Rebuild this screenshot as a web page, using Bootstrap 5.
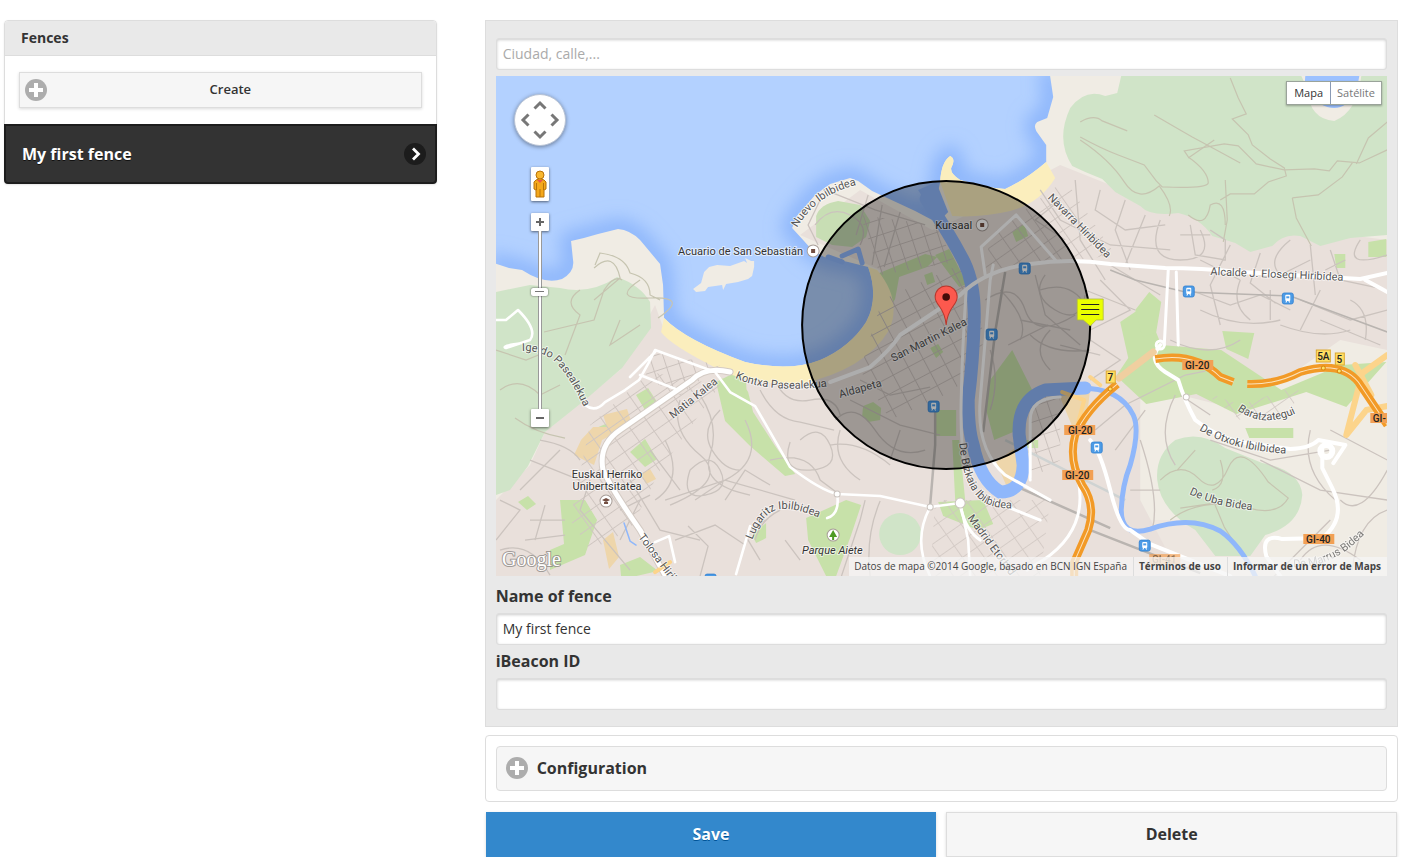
<!DOCTYPE html>
<html lang="en">
<head>
<meta charset="utf-8">
<meta name="viewport" content="width=device-width, initial-scale=1">
<title>Fences</title>
<link href="https://cdn.jsdelivr.net/npm/bootstrap@5.3.0/dist/css/bootstrap.min.css" rel="stylesheet">
<style>
body{font-family:"Open Sans","Noto Sans",sans-serif;font-size:16px;line-height:20px;color:#333;background:#fff}
.side-col{padding:0 36px 0 4px}
.main-col{padding:0 20px 0 12px}
.fence-panel{border:1px solid #ddd;border-radius:4px;box-shadow:0 1px 2px rgba(0,0,0,.1)}
.fence-title{background:#e9e9e9;border-bottom:1px solid #ddd;font-size:14px;font-weight:700;padding:7px 16px;margin:0;line-height:20px;border-radius:3px 3px 0 0}
.flat-btn{background:#f6f6f6;border:1px solid #ddd;border-radius:0;color:#333;font-weight:700;box-shadow:0 1px 3px rgba(0,0,0,.15)}
.flat-btn:hover{background:#ededed;border-color:#ddd;color:#333}
.create-wrap{padding:16px 14px}
.create-btn{font-size:13px;font-weight:600;line-height:18px;padding:7px 0 9px 20px;position:relative}
.create-btn svg{position:absolute;left:5px;top:6px}
.fence-item{background:#333;border:2px solid #1d1d1d;border-radius:0 0 4px 4px;color:#fff;font-weight:700;padding:17px 9px 17px 16px;margin:0 -1px -1px;line-height:22px;text-decoration:none;text-shadow:0 1px 0 #111}
.fence-item:hover{color:#fff}
.editor{background:#e9e9e9;border:1px solid #ddd;padding:17px 10px 16px}
.field{height:32px;border:1px solid #ddd;border-radius:3px;font-size:14px;line-height:20px;padding:4px 6px 6px;color:#333;box-shadow:inset 0 1px 3px rgba(0,0,0,.2)}
.field::placeholder{color:#aaa;opacity:1}
.field-label{display:block;font-weight:700;line-height:20px;margin:0 0 7px}
.field+.field-label{margin-top:6px}
.config-panel{border:1px solid #ddd;border-radius:4px;padding:10px;margin-top:8px}
.config-btn{background:#f6f6f6;border:1px solid #ddd;border-radius:4px;font-weight:700;color:#333;padding:10px 9px 11px;line-height:20px;gap:9px}
.config-btn:hover{background:#ededed;border-color:#ddd}
.actions{padding:0 1px;margin-top:10px;gap:10px}
.actions .btn{line-height:21px;padding:11px;flex:1 1 0}
.save-btn{background:#38c;border:1px solid #38c;border-radius:0;color:#fff;font-weight:700;text-shadow:0 1px 0 #059;box-shadow:0 1px 3px rgba(0,0,0,.15)}
.map-box{height:500px;margin:6px 0 10px;background:#b3d1ff}
.map-svg{display:block;width:100%;height:100%}
.map-nav{position:absolute;left:18px;top:18px;width:52px}
.pan-pad{width:52px;height:52px;border-radius:50%;background:#fff;border:1px solid #b9c4d6;box-shadow:0 1px 4px rgba(0,0,0,.4)}
.map-key{width:18px;height:18px;padding:0;border:0;border-radius:1px;background:#fff;box-shadow:0 1px 3px rgba(0,0,0,.55);display:grid;place-items:center}
.peg{height:34px;margin:21px 0 12px}
.zoom-track{width:18px;height:178px;position:relative}
.zoom-track input{-webkit-appearance:none;appearance:none;position:absolute;left:50%;top:50%;width:178px;height:18px;margin:0;background:transparent;transform:translate(-50%,-50%) rotate(-90deg)}
.zoom-track input::-webkit-slider-runnable-track{height:4px;background:#fff;border-top:1px solid #999;border-bottom:1px solid #999;box-sizing:border-box}
.zoom-track input::-webkit-slider-thumb{-webkit-appearance:none;width:8px;height:17px;margin-top:-8px;border-radius:2px;background:linear-gradient(#777,#777) center/1px 9px no-repeat #fff;box-shadow:0 0 2px rgba(0,0,0,.7)}
.map-type{position:absolute;right:5px;top:5px;background:#fff;border:1px solid #9aa39a;box-shadow:0 1px 2px rgba(0,0,0,.3)}
.map-type button{border:0;background:#fff;font-size:11px;line-height:22px;padding:0 7px;color:#777}
.map-type button+button{border-left:1px solid #8a9ab5;padding:0 6px}
.map-type .on{color:#333}
.map-credit{position:absolute;right:0;bottom:0;background:rgba(245,245,245,.75);font-size:10px;line-height:19px;color:#444;white-space:nowrap}
.map-credit>*{padding:0 6px 0 5px;color:#444;text-decoration:none}
.map-credit a{font-weight:700;border-left:1px solid #ddd}
.map-logo{font-family:"Liberation Serif",serif;font-size:20px}
.lb{font-family:Roboto,sans-serif;font-size:11px;fill:#555;stroke:#fff;stroke-opacity:.6;stroke-width:2px;paint-order:stroke;stroke-linejoin:round}
.poi{fill:#333}
.shield{font-family:Roboto,sans-serif;font-size:10px;font-weight:500;fill:#222;text-anchor:middle}
</style>
</head>
<body>
<svg width="0" height="0" class="position-absolute" aria-hidden="true">
  <symbol id="plus" viewBox="0 0 22 22"><circle cx="11" cy="11" r="11" fill="#adadad"/><path d="M9 4h4v5h5v4h-5v5H9v-5H4V9h5z" fill="#fff"/></symbol>
</svg>
<div class="container-fluid p-0">
<div class="row g-0 pt-1 mt-3">
  <aside class="col-4 side-col">
    <div class="fence-panel">
      <h2 class="fence-title">Fences</h2>
      <div class="create-wrap">
        <button type="button" class="btn flat-btn create-btn w-100"><svg width="22" height="22" aria-hidden="true"><use href="#plus"/></svg>Create</button>
      </div>
      <a href="#" class="fence-item d-flex align-items-center justify-content-between">My first fence
        <svg width="22" height="22" viewBox="0 0 22 22" aria-hidden="true"><circle cx="11" cy="11" r="11" fill="#1c1c1c"/><path d="M9 5.500l5.500 5.500L9 16.500" fill="none" stroke="#fff" stroke-width="2.800"/></svg></a>
    </div>
  </aside>
  <main class="col-8 main-col">
    <form class="editor">
      <input class="form-control field" type="text" placeholder="Ciudad, calle,..." aria-label="Ciudad, calle">
      <div class="map-box position-relative overflow-hidden">
      <svg class="map-svg" viewBox="496 76 891 500" preserveAspectRatio="xMidYMid slice" role="img" aria-label="Mapa">
        <defs>
          <filter id="soft" x="-10%" y="-10%" width="120%" height="120%"><feGaussianBlur stdDeviation="9"/></filter>
          <pattern id="gridA" width="17" height="15" patternUnits="userSpaceOnUse" patternTransform="rotate(-28)"><path d="M0 0H17M0 0V15" fill="none" stroke="#cbc2bd" stroke-width="2"/></pattern>
          <pattern id="gridB" width="13" height="15" patternUnits="userSpaceOnUse" patternTransform="rotate(-18)"><path d="M0 0H13M0 0V15" fill="none" stroke="#cbc2bd" stroke-width="2"/></pattern>
          <pattern id="gridC" width="18" height="14" patternUnits="userSpaceOnUse" patternTransform="rotate(-35)"><path d="M0 0H18M0 0V14" fill="none" stroke="#cfc6c1" stroke-width="2"/></pattern>
          <path id="shore" d="M490 262L509 268L522 270Q545 285 562 279Q575 272 573 260L571 241Q585 238 598 234L618 229Q630 230 640 240L660 264L663 285L664 318Q685 340 745 362Q790 372 820 360Q850 347 866 322Q879 298 868 267L848 262L824 257L812 250L803 240L792 228L797 216L815 195L830 184L850 178L858 181L872 191L915 211L932 220L940 182Q941 162 950 156Q956 159 951 168Q950 174 960 180Q985 188 1005 189Q1025 180 1046 162V145L1036 131Q1033 125 1037 122L1047 118L1053 97L1049 70"/>
          <g id="train"><rect width="11" height="11" rx="2" fill="#4c9be6" stroke="#2f7fd0" stroke-width=".8"/><rect x="3" y="1.800" width="5" height="6.200" rx="1" fill="#fff"/><path d="M4 3.300h3v2H4z" fill="#4c9be6"/><path d="M3.500 9.500l1-1.500M7.500 9.500l-1-1.500" stroke="#fff"/></g>
        </defs>
        <rect x="496" y="76" width="891" height="500" fill="#b3d1ff"/>
        <use href="#shore" fill="none" stroke="#7eabfa" stroke-opacity=".75" stroke-width="20" filter="url(#soft)"/>
        <path d="M490 262L509 268L522 270Q545 285 562 279Q575 272 573 260L571 241Q585 238 598 234L618 229Q630 230 640 240L660 264L663 285L664 318Q685 340 745 362Q790 372 820 360Q850 347 866 322Q879 298 868 267L848 262L824 257L812 250L803 240L792 228L797 216L815 195L830 184L850 178L858 181L872 191L915 211L932 220L940 182Q941 162 950 156Q956 159 951 168Q950 174 960 180Q985 188 1005 189Q1025 180 1046 162V145L1036 131Q1033 125 1037 122L1047 118L1053 97L1049 70H1390V580H490Z" fill="#f0ece4"/>
        <path d="M709 267l8-2 13 1 14-5 3 2-2-5 6 3 3 0 0 6-2 9-4 3-10 3-12 2-3 6-1-5-14 2-3 4-9 1-3-3 8-6 3-11z" fill="#f0ece4"/>
        <!-- built-up area -->
        <g fill="#e9e0db">
          <path d="M655 305L664 330Q720 370 780 380Q850 368 880 320L880 270L800 235L860 190L932 230L960 218L1060 165L1110 185L1200 215L1387 240V350L1340 340L1240 410L1180 395L1140 400V500L1180 576H496V500L530 465L545 432L620 370Z"/>
          <path d="M1150 520h100l30 56h-140z" opacity=".5"/>
        </g>
        <!-- woods -->
        <g fill="#d0e4c8">
          <path d="M496 292L530 285L560 288Q590 295 617 277Q640 285 650 302L651 328L622 368L585 400L545 432L528 466L510 490L496 495Z"/>
          <path d="M1121 76L1117 93L1105 96Q1085 88 1070 108Q1055 140 1072 166L1085 172L1102 179L1115 192L1140 206Q1150 217 1178 213Q1200 218 1212 236L1235 243L1250 252L1272 246Q1283 233 1300 236L1320 246L1350 238L1387 235V76Z"/>
          <path d="M1175 440Q1200 430 1225 448L1262 463Q1300 470 1302 495Q1300 525 1265 535L1250 556H1215L1195 530Q1160 510 1157 480Q1155 455 1175 440Z"/>
          <circle cx="900" cy="534" r="21"/>
        </g>
        <path d="M1301 76h60q-4 36-27 45q-25-2-27-32z" fill="#f0ece4"/>
        <path d="M1305 76h54l-3 16q-14 24-36 12l-16-14z" fill="#9cc1ff"/>
        <!-- parks -->
        <path d="M816 216q4-12 22-15l22 4 10 16-4 16-14 10-20-2-16-8z" fill="#c8deb4"/>
        <g fill="#c7e1a9">
          <path d="M1120 322l25-17 16 40 60 5 60 40 60-25 45-3-40 45-40-15-70 22-40-20-50 10-30-28 12-18z"/>
          <path d="M1135 310l14-18 12 10-5 30-14 5zM1222 331l32 2-6 26-22-10zM1245 428h48v10h-44z"/>
          <path d="M716 382l20-10 12 20 5 20 22 34 20 28-10 2-35-30-25-25zM718 378l28 4 1 18-15-5z"/>
          <path d="M1012 350l20 40-14 40-24 10-8-30 4-30zM877 274l24-10 24-10 12 3-10 10-28 10-4 22-6 10zM935 255l14-6 18 35-8 3zM924 275l8-3 3 10-8 3z"/>
          <path d="M560 500h25l12 20-12 35-35 15v-20l14-6zM630 452l15-13 12 20-12 8zM636 395l12-7 9 14-12 8zM596 428l12-5 5 8-12 5z"/>
          <path d="M806 518l40-18 15 5-10 30-15 41h-10l-18-36zM938 502l45-2 10 24-15 6-35-14zM863 406l10-4 8 6-1 12-12 2-6-6zM1026 440h12v8h-12z"/>
          <path d="M752 535l14-12v15l-10 5zM620 565l20-8 18 14-22 5h-15zM1334 254h11v14h-9zM1368 242l18-3v18h-18zM1012 232l12-8 4 12-12 6zM518 502l10-6 8 8-9 6z"/>
          <path d="M930 348l8-4 5 8-7 6zM952 440h7l6 60h-10zM934 410h22v26h-22z"/>
        </g>
        <g fill="#eed6ab"><path d="M581 440l12-13h14l-4-12 24-6 5 15-30 16-8 25-20-10zM1056 388h34l-4 36-10 12zM996 462l24-18 2 18-14 28zM603 540l10-8 6 25-10 12zM640 474l10-5 6 10-10 5z"/></g>
        <!-- beaches -->
        <path d="M664 318Q685 340 745 362Q790 372 820 360Q850 347 866 322Q879 298 868 267L877 270Q902 300 889 330Q865 370 800 384Q750 385 720 370Q670 345 661 332Z" fill="#fbeebd"/>
        <path d="M940 182Q941 162 950 156Q956 159 951 168Q950 174 960 180Q985 188 1005 189Q1025 180 1046 162L1055 178Q1040 203 1010 211Q980 218 952 216Z" fill="#fbeebd"/>
        <!-- hill tracks -->
        <g fill="none" stroke="#c6c4b0" stroke-width="1.200">
          <path d="M595 265l5-12q25 3 30 20q20 5 20 22l10 5M594 268q20-18 26 10l-26 22M544 332l50-12 10-30q10-15 18-10M580 290q-18 12 0 25l-15 40M496 350l30 10 20-8M500 390q20-15 40 5l20-10M515 418q20 15 50 20M640 280q-30 20 10 18t8 20M620 320l-10 25 30-20"/>
          <path d="M1080 122q14-8 22-1l25 10M1080 137q22 12 38 18l26 10 12 16 6 6q44 2 46-4q0-12-20-26l-4-6 40-7 14 2 18 18 28 6 30-1 15 2 8-10 22 2 30-14M1154 115q24 14 38 22l26 14 22 12"/>
          <path d="M1230 78l8 20 8 16-14 5 16 16 4 10 18 14 14 9 2 8-18 6-14 12h-24l-10 6M1188 158l26-18M1080 140q30 20 44 42t35 4q15 20 10 30M1225 180l2 40-4 22M1292 198l26-3 24-18 10-14M1292 198l4 20 15 28M1356 164l12-26 19-16M1188 215q18 15 22-10q15-8 15 20"/>
          <path d="M1160 480q20-20 38-2t30-10 40 14l20 16q-10 18-40 10M1170 520q20-16 50-16M1195 450l-18 20M1220 460q8 25-8 30M1180 508l34-5 10 24 14 22"/>
        </g>
        <!-- street grids and lanes -->
        <path d="M882 300L965 262L985 340 955 390 890 420 860 370Z" fill="url(#gridA)"/>
        <path d="M860 215L935 225 955 262 880 275Z" fill="url(#gridB)"/>
        <path d="M990 235L1065 180 1115 255 1060 262 985 270Z" fill="url(#gridC)"/>
        <path d="M590 425L650 372 720 385 660 470 630 530 590 550 570 520Z" fill="url(#gridC)"/>
        <path d="M650 352L720 365 680 395 645 378Z" fill="url(#gridB)"/>
        <path d="M935 500L1050 500 1040 576 930 576Z" fill="url(#gridC)" opacity=".8"/>
        <path d="M1030 390h30v70l-30 20z" fill="url(#gridB)"/>
        <path d="M1200 390L1240 405 1300 385 1290 415 1240 420Z" fill="url(#gridC)" opacity=".8"/>
        <g fill="none" stroke="#cbc3be" stroke-width="1.300">
          <path d="M680 400q-10 30 20 55t-30 50M700 395q20 30 10 60t40 40M690 470q20-20 30 0t-15 25-15-25M720 410q-20 20-8 40t28 20M745 420q20 40-20 60l-30 20M665 500l60-20 70 20M675 540l40-15 30 20M700 576l8-30-20-20M760 390q15 30 40 32l34 8M775 380q10 25 35 20t30 15M800 440q20-18 30 5t-20 25-20-28M770 460q40-10 50 20l20 15M840 430q-10 30 20 50M860 380l30 15 40-8M850 400l50 25 40 10M780 510q-20 10-25 30M800 560l-15-20M865 500l-5 20-20 60M870 576q-5-40 10-75"/>
          <path d="M1040 190l20 30 50 25 60 5M1060 200l-25 20 30 20M1075 180l5 60 25 40M1100 190l-5 20 30 20 40-5M1125 200l-10 30 15 40M1145 215l-20 50M1160 220q-15 40 20 40t20-30M1190 225l5 30 30 5v-20l-15-10M1230 245l-20 40 10 40M1180 235h30M1260 253l-10 30 25 20M1290 240q-25 20-10 35l30-15M1310 245l5 50M1330 250l10 30 47 10M1345 260l-20 10M1360 240q-20 30 27 15M1190 290l40 15 30-10 30 15M1240 280q-10 25 10 40M1270 290v30M1300 300l50 20 37-10M1320 290l-20 40M1200 310q40 20 80 10M1170 340q40 20 70 0M1350 300q20 10 15 40"/>
          <path d="M985 300q30-20 40 10t50 5M1000 290q30 30 20 50M1045 275q-15 20 10 35t30-15M1020 320l50 10M990 350q10 30 0 60M1050 330q-20 20 0 40M1060 345l40 10M1100 280l30 30-40 20M1085 290l50 20M1110 265l50 30M1090 340l30 20-30 20M1095 430l30-25 60-30 20-4M1115 450l30-40M1130 490h30M1140 440q20 60 12 90M1175 395q-20 40 0 70M1180 395l30 20M1210 440l60 20 60-10M1260 460l60 30 67 10M1330 430l57 30M1340 500q20 20 47-30M1330 520l-60 60M1387 510q-30 10-35 60M1300 560q20-30 60 0M1310 430q-10 40 25 70"/>
          <path d="M500 500l20 10-24 30M530 520h35M525 540l40-5M500 550q30-10 50 25M540 440q30 5 40 20M530 460l50 20M520 490l40-40M590 480l-10 30 50 60M630 480l30 50 40 10M640 500l-20 40M650 450l30 40M665 440q20 40-10 60"/>
          <path d="M815 225q15-20 35-10t10 30M820 200l-12 25 10 20M868 195l-12 40M882 205l-10 60M900 212l-16 55M825 190l50 20 50 15"/>
          <path d="M835 420q20-20 40 10t50 20M830 445q30-5 60 20M900 430l-10 30M1040 290q30-10 45 15M1030 335q20 20 60 15M1035 275l10 40 35 30M1008 345l40-20M725 500l20-30 25 15M760 560l-15-25 20-15M620 510l30-15M545 505l-10 35M1200 260l40 20M1320 320l60 25M1280 325q40 15 70 5"/>
        </g>
        <!-- rail -->
        <g fill="none" stroke="#b9b4b0" stroke-width="2.500"><path d="M1005 272l-10 60-12 100M935 405v40l-5 60M1020 488l90 40M1085 528l115 45"/><path d="M1110 270l25 10 50 12 105 4 97 36" stroke-width="1.500"/><path d="M1005 440l120 60" stroke="#cfd3d2"/></g>
        <!-- rivers -->
        <g fill="none" stroke="#8fb7fb" stroke-linecap="round" stroke-linejoin="round">
          <path d="M926 199Q950 235 964 262Q975 285 974 320Q973 360 968 400Q968 430 973 445Q980 480 1000 492Q1022 492 1023 465L1019 435Q1017 400 1045 390L1085 388" stroke-width="13"/>
          <path d="M1080 388Q1120 388 1133 415Q1140 430 1130 465Q1122 485 1121 510Q1121 538 1150 529Q1190 515 1220 531Q1240 545 1255 576" stroke-width="5"/>
          <path d="M624 523l6 18 6 4" stroke-width="1.500"/><path d="M828 257l14 5M842 256l16-7 4 14" stroke-width="5"/>
        </g>
        <path d="M918 190l18-8 12 30-10 10z" fill="#8fb7fb"/>
        <!-- main streets -->
        <g fill="none" stroke-linejoin="round" stroke-linecap="round">
          <path d="M730 372Q705 366 692 380L620 430Q598 445 603 470Q612 490 640 530L665 575" stroke="#d4cbc4" stroke-width="7"/>
          <g stroke="#fff">
            <path d="M730 372Q705 366 692 380L620 430Q598 445 603 470Q612 490 640 530L665 575" stroke-width="5"/>
            <path d="M830 382L870 367Q890 350 900 335L960 295Q985 270 1030 264Q1070 258 1110 264L1165 268Q1200 268 1240 272L1360 279L1387 273M1365 280L1387 292" stroke-width="4"/>
            <path d="M966 290Q962 350 961 400Q960 440 965 470M993 265L990 280Q984 350 980 400Q976 450 1005 475L1050 500M1168 270L1164 345M1176 272L1178 345M985 275l-4-28 35-32 40 46" stroke-width="3"/>
            <path d="M496 320h10l12-10q20 20 12 30l-24 8q-6-2 16-5M585 405q10 8 20-3l20-12 14-10 10-18 6-12 60 22 15 20 25 14 22 38 13 23Q820 490 837 494L880 496 930 507 960 503 968 540 970 576M930 507Q912 540 930 576M837 494q3 20-10 24M640 375l38 15M655 352l-25 25M736 574l14-48M655 542l14-6 6 26" stroke-width="2.600"/>
            <path d="M1160 345Q1147 360 1165 372L1178 380Q1184 400 1195 420Q1215 436 1240 442L1290 449Q1310 448 1318 440L1345 445M1322 450v18l10 20q15 30-10 50l-40 1Q1260 533 1266 556L1280 576M1090 440q10 10 20 50t20 40l20 14 80 32M1345 445l-12 18" stroke-width="4"/>
            <path d="M1030 480V420Q1030 398 1060 397M1078 480q10 50-35 80l-16 10M990 500l50 20M980 540q-15-10-20-35" stroke-width="3"/>
            <circle cx="960" cy="503" r="5" stroke="#c9c2bd" fill="#fff"/><circle cx="930" cy="507" r="3" stroke="#c9c2bd" fill="#fff"/><circle cx="837" cy="494" r="3" stroke="#c9c2bd" fill="#fff"/><circle cx="1160" cy="345" r="4" stroke-width="3"/><circle cx="1186" cy="397" r="3" stroke="#c9c2bd" fill="#fff"/><circle cx="1326" cy="451" r="6" stroke-width="6"/>
          </g>
          <g stroke="#fcd48b"><path d="M1387 355l-25 18-16 62 20-25 21-4M1355 365l16 30" stroke-width="6"/><path d="M1062 392l22 8-8 30M1100 385l-10-8M655 572l15-10" stroke-width="4"/></g>
          <path d="M1119 378l34-26" stroke="#f0cfa0" stroke-width="7"/>
          <path d="M1117 384Q1085 410 1075 435Q1068 460 1082 485Q1096 505 1088 530L1074 562V576M1155 359Q1195 352 1220 377L1233 382M1247 384Q1275 385 1300 372Q1340 360 1358 382L1387 425" stroke="#f29a27" stroke-width="8" stroke-linecap="butt"/>
          <path d="M1117 384Q1085 410 1075 435Q1068 460 1082 485Q1096 505 1088 530L1074 562V576M1155 359Q1195 352 1220 377L1233 382M1247 384Q1275 385 1300 372Q1340 360 1358 382L1387 425" stroke="#fbe3bd" stroke-width="1"/>
          <g fill="#ffe168" stroke="#d98a10"><circle cx="1110" cy="389" r="2"/><circle cx="1323" cy="368" r="2"/><circle cx="1339" cy="371" r="2"/></g>
        </g>
        <!-- shields -->
        <g fill="#f2a054"><path d="M1182 360h31v10h-31zM1064 425h31v10h-31zM1062 470h31v10h-31zM1303 534h31v10h-31zM1370 413h20v10h-20z"/><path d="M1149 554h31v10h-31z" opacity=".7"/></g>
        <g fill="#ffdf63" stroke="#dca832"><path d="M1106 371h9v12h-9zM1316 350h14v12h-14zM1335 353h9v12h-9z"/></g>
        <g class="shield"><text x="1197" y="369">GI-20</text><text x="1080" y="434">GI-20</text><text x="1077" y="479">GI-20</text><text x="1318" y="543">GI-40</text><text x="1379" y="422">GI-</text><text x="1164" y="563" opacity=".5">GI-41</text><text x="1110" y="381">7</text><text x="1323" y="360">5A</text><text x="1339" y="363">5</text></g>
        <use href="#train" x="1019" y="263"/><use href="#train" x="986" y="329"/><use href="#train" x="928" y="401"/><use href="#train" x="1183" y="286"/><use href="#train" x="1282" y="293"/><use href="#train" x="1091" y="442"/><use href="#train" x="1139" y="540"/><use href="#train" x="705" y="574"/>
        <!-- place names -->
        <defs>
          <path id="t1" d="M797 228Q818 192 862 184"/><path id="t2" d="M1047 198L1112 264"/><path id="t3" d="M1210 275L1350 281"/>
          <path id="t4" d="M522 351Q545 350 558 365Q572 380 586 412"/><path id="t5" d="M673 419L724 378"/><path id="t6" d="M735 378Q770 395 840 385"/>
          <path id="t7" d="M893 362L976 320"/><path id="t8" d="M840 398L886 385"/><path id="t9" d="M959 443Q963 490 985 503Q1000 511 1030 507"/>
          <path id="t10" d="M967 518L1010 576"/><path id="t11" d="M752 540Q764 509 782 509Q798 508 824 520"/><path id="t12" d="M638 537L688 604"/>
          <path id="t13" d="M1199 430Q1235 453 1300 454"/><path id="t14" d="M1237 410Q1265 430 1300 411"/><path id="t15" d="M1189 494Q1215 507 1260 511"/><path id="t16" d="M1293 567Q1335 568 1368 530"/>
        </defs>
        <g class="lb">
          <text><textPath href="#t1">Nuevo Ibilbidea</textPath></text><text><textPath href="#t2">Navarra Hiribidea</textPath></text><text><textPath href="#t3">Alcalde J. Elosegi Hiribidea</textPath></text>
          <text><textPath href="#t4">Igeldo Pasealekua</textPath></text><text><textPath href="#t5">Matia Kalea</textPath></text><text><textPath href="#t6">Kontxa Pasealekua</textPath></text>
          <text><textPath href="#t7">San Martin Kalea</textPath></text><text><textPath href="#t8">Aldapeta</textPath></text><text><textPath href="#t9">De Bizkaia Ibilbidea</textPath></text>
          <text><textPath href="#t10">Madrid Etorbidea</textPath></text><text><textPath href="#t11">Lugaritz Ibilbidea</textPath></text><text><textPath href="#t12">Tolosa Hiribidea</textPath></text>
          <text><textPath href="#t13">De Otxoki Ibilbidea</textPath></text><text><textPath href="#t14">Baratzategui</textPath></text><text><textPath href="#t15">De Uba Bidea</textPath></text><text opacity=".75"><textPath href="#t16">De Marrus Bidea</textPath></text>
          <g class="poi"><text x="678" y="255">Acuario de San Sebastián</text><text x="935" y="229">Kursaal</text><text x="607" y="478" text-anchor="middle">Euskal Herriko</text><text x="607" y="490" text-anchor="middle">Unibertsitatea</text><text x="802" y="554" font-style="italic">Parque Aiete</text></g>
        </g>
        <g fill="#fff" stroke="#a89e98"><circle cx="813" cy="251" r="6"/><circle cx="982" cy="225" r="6"/><circle cx="606" cy="501" r="6"/><circle cx="833" cy="535" r="6"/></g>
        <path d="M811 249h4v4h-4zM980 223h4v4h-4zM602 500l4-2 4 2-4 2zM604 502h4v2h-4z" fill="#734f42"/><path d="M833 530l4 7h-3v3h-2v-3h-3z" fill="#4f9b25"/>
        <!-- fence radius -->
        <circle cx="946" cy="325" r="144" fill="#000" fill-opacity=".32" stroke="#000" stroke-width="2"/>
        <path d="M946 325Q945 314 939 306Q935 301 935 297A11 11 0 0 1 957 297Q957 301 953 306Q947 314 946 325Z" fill="#fc594e" stroke="#b8372d"/><circle cx="946" cy="297" r="3.800" fill="#440c08"/>
        <path d="M1077 299h26v21h-7l-6 6-7-6h-6z" fill="#eaff00" stroke="#aeba42" stroke-width=".8"/><path d="M1081 304.500h18M1081 309.500h18M1081 314.500h18" stroke="#222" stroke-width="1.200"/>
        <text class="map-logo" x="502" y="566" fill="#fff" stroke="#8d8885" stroke-opacity=".8" stroke-width="2" paint-order="stroke">Google</text>
      </svg>
      <div class="map-nav d-flex flex-column align-items-center">
        <button type="button" class="pan-pad p-0" aria-label="Pan"><svg class="d-block" width="50" height="50" viewBox="0 0 50 50" fill="none" stroke="#777" stroke-width="3"><path d="M19.500 13.500L25 8l5.500 5.500M19.500 36.500L25 42l5.500-5.500M13.500 19.500L8 25l5.500 5.500M36.500 19.500L42 25l-5.500 5.500"/></svg></button>
        <button type="button" class="map-key peg" aria-label="Street View"><svg width="14" height="30" viewBox="0 0 14 30"><path d="M3 11q4-3 8 0l2 2v7l-2 1v7H3v-7l-2-1v-7z" fill="#f4a81c" stroke="#b8720a"/><path d="M4 11h6l-3 3z" fill="#e6584b"/><path d="M7 20v8M3.500 14v7M10.500 14v7" stroke="#b8720a"/><circle cx="7" cy="6" r="4" fill="#f8b830" stroke="#b8720a"/></svg></button>
        <button type="button" class="map-key" aria-label="Zoom in"><svg width="10" height="10"><path d="M1 5h8M5 1v8" stroke="#666" stroke-width="2"/></svg></button>
        <div class="zoom-track"><input type="range" min="0" max="21" value="14" aria-label="Zoom"></div>
        <button type="button" class="map-key" aria-label="Zoom out"><svg width="10" height="10"><path d="M1 5h8" stroke="#666" stroke-width="2"/></svg></button>
      </div>
      <div class="map-type d-flex"><button type="button" class="on">Mapa</button><button type="button">Satélite</button></div>
      <div class="map-credit d-flex"><span>Datos de mapa ©2014 Google, basado en BCN IGN España</span><a href="#">Términos de uso</a><a href="#">Informar de un error de Maps</a></div>
      </div>
      <label class="field-label" for="fenceName">Name of fence</label>
      <input id="fenceName" class="form-control field" type="text" value="My first fence">
      <label class="field-label" for="beaconId">iBeacon ID</label>
      <input id="beaconId" class="form-control field" type="text">
    </form>
    <section class="config-panel">
      <button type="button" class="btn config-btn w-100 d-flex align-items-center text-start"><svg width="22" height="22" aria-hidden="true"><use href="#plus"/></svg>Configuration</button>
    </section>
    <div class="actions d-flex">
      <button type="button" class="btn save-btn">Save</button>
      <button type="button" class="btn flat-btn">Delete</button>
    </div>
  </main>
</div>
</div>
<script src="https://cdn.jsdelivr.net/npm/bootstrap@5.3.0/dist/js/bootstrap.bundle.min.js"></script>
</body>
</html>
